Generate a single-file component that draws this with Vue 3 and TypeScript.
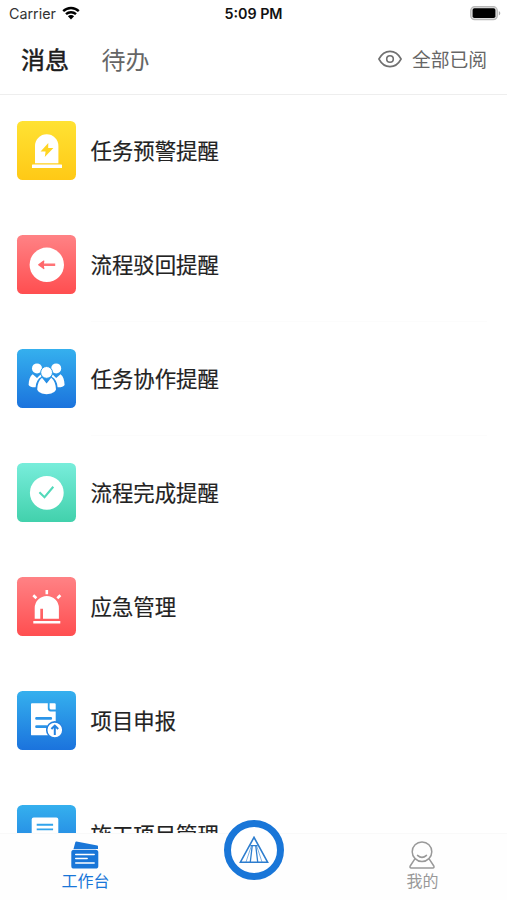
<script setup lang="ts">
import { ref } from 'vue'

interface MessageItem {
  icon: string
  tone: 'yellow' | 'red' | 'blue' | 'green'
  label: string
  divided?: boolean
}

const activeTab = ref<number>(0)
const tabs: string[] = ['消息', '待办']
const messages: MessageItem[] = [
  { icon: 'warning', tone: 'yellow', label: '任务预警提醒' },
  { icon: 'reject', tone: 'red', label: '流程驳回提醒', divided: true },
  { icon: 'team', tone: 'blue', label: '任务协作提醒', divided: true },
  { icon: 'done', tone: 'green', label: '流程完成提醒' },
  { icon: 'alarm', tone: 'red', label: '应急管理' },
  { icon: 'declare', tone: 'blue', label: '项目申报' },
  { icon: 'project', tone: 'blue', label: '施工项目管理' },
]
</script>

<template>
  <div class="screen">
    <div class="status">
      <div class="carrier">
        <span>Carrier</span>
        <svg class="wifi" width="18" height="14" viewBox="0 0 18 14">
          <path d="M1.2 5.2a11.2 11.2 0 0 1 15.6 0M4 8.2a7.2 7.2 0 0 1 10 0" fill="none" stroke="#000" stroke-width="2.4" />
          <path d="M9 13.6 5.9 10.3a4.4 4.4 0 0 1 6.2 0Z" fill="#000" />
        </svg>
      </div>
      <div class="time">5:09 PM</div>
      <svg class="battery" width="31" height="15" viewBox="0 0 31 15">
        <rect x=".7" y=".7" width="26.6" height="13" rx="4" fill="#ddd" stroke="#b8b8b8" stroke-width="1.2" />
        <rect x="2.6" y="2.3" width="22.8" height="9.8" rx="1.8" fill="#000" />
        <path d="M28.8 5v4.4c2-.8 2-3.6 0-4.4" fill="#aaa" />
      </svg>
    </div>

    <header class="header">
      <nav class="tabs">
        <span
          v-for="(tab, i) in tabs"
          :key="tab"
          class="tab"
          :class="{ active: i === activeTab }"
          @click="activeTab = i"
        >{{ tab }}</span>
      </nav>
      <div class="read-all">
        <svg width="24" height="18" viewBox="0 0 24 18" fill="none" stroke="#707070" stroke-width="1.6">
          <path d="M.9 9C6.4-1.2 17.6-1.2 23.1 9 17.6 19.2 6.4 19.2.9 9Z" stroke-linejoin="round" />
          <circle cx="12" cy="9" r="3.3" />
        </svg>
        <span>全部已阅</span>
      </div>
    </header>

    <main class="list">
      <div v-for="item in messages" :key="item.label" class="row">
        <div class="tile" :class="item.tone">
          <svg v-if="item.icon === 'warning'" viewBox="0 0 59 59">
            <path d="M18 42.3V25a11.7 11.7 0 0 1 23.4 0v17.3Z" fill="#fff" />
            <rect x="15" y="43.4" width="30" height="3.7" rx=".6" fill="#fff" />
            <path d="M31.3 22 23.6 30.4h5L27.8 36l8.6-9h-5.2Z" fill="#ffd522" />
          </svg>
          <svg v-else-if="item.icon === 'reject'" viewBox="0 0 59 59">
            <circle cx="29.8" cy="29.8" r="17.2" fill="#fff" />
            <path d="M25 29.8h13.2" stroke="#ff7376" stroke-width="2.4" />
            <path d="M26.8 26 21.7 29.8l5.1 3.8-.7-3.8Z" fill="#ff686b" stroke="#ff686b" stroke-width="1.2" stroke-linejoin="round" />
          </svg>
          <svg v-else-if="item.icon === 'team'" viewBox="0 0 59 59" fill="#fff">
            <circle cx="20" cy="19.4" r="5" />
            <circle cx="39.2" cy="19.4" r="5" />
            <path d="M15.7 25.2 20 29l3.5-3.5.9 2.2c-3.7 2.1-5.4 5.6-5.8 10.5-3.1.3-6-.7-7-2.3.2-4.6 1.3-8.7 4.1-10.7Z" />
            <path d="m43.5 25.2-4.3 3.8-3.5-3.5-.9 2.2c3.7 2.1 5.4 5.6 5.8 10.5 3.1.3 6-.7 7-2.3-.2-4.6-1.3-8.7-4.1-10.7Z" />
            <circle cx="29.6" cy="23.4" r="5.9" stroke="#2e9ee8" stroke-width="1" />
            <path d="m25 28.8 4.6 5.7 4.6-5.7c3 2.2 4.6 6.4 4.8 11.8-1 2.8-4.9 4.6-9.4 4.6s-8.4-1.8-9.4-4.6c.2-5.4 1.8-9.6 4.8-11.8Z" />
          </svg>
          <svg v-else-if="item.icon === 'done'" viewBox="0 0 59 59">
            <circle cx="29.8" cy="29.8" r="16.9" fill="#fff" />
            <path d="m22.4 29.2 5.1 5 8.8-10.4" fill="none" stroke="#53d9ba" stroke-width="2.1" />
          </svg>
          <svg v-else-if="item.icon === 'alarm'" viewBox="0 0 59 59">
            <path d="M17.7 41.8V31a12.1 12.1 0 0 1 24.2 0v10.8H26V31.7h-2.7v10.1Z" fill="#fff" />
            <path d="M16.3 45.3h27M29.8 13v4.2M16.3 18.3l3.1 3M43.4 18.3l-3.1 3" stroke="#fff" stroke-width="2.6" />
          </svg>
          <svg v-else-if="item.icon === 'declare'" viewBox="0 0 59 59">
            <path d="M14 13.2q0-.9.9-.9h15.9v5.3q0 2.8 2.8 2.8h5.1v23.9H14.9q-.9 0-.9-.9Z" fill="#fff" />
            <path d="M32.6 12.3h5q1.1 0 1.1 1.1v5.2h-4.4q-1.7 0-1.7-1.7Z" fill="#fff" />
            <path d="M19.5 27.4h14.3M19.5 35.7h9.8" stroke="#2b94e8" stroke-width="2.7" stroke-linecap="round" />
            <circle cx="37.8" cy="39" r="8.1" fill="#fff" stroke="#2583e1" stroke-width="1.6" />
            <path d="M37.8 44v-9M34.4 38l3.4-3.4 3.4 3.4" fill="none" stroke="#2583e1" stroke-width="2" />
          </svg>
          <svg v-else viewBox="0 0 59 59">
            <rect x="14.7" y="12.6" width="26.6" height="33" rx="2" fill="#fff" />
            <path d="M19.7 19.8h16.4M19.7 24.4h16.4M19.7 28.9h6" stroke="#31a4ec" stroke-width="1.9" />
          </svg>
        </div>
        <div class="content" :class="{ divided: item.divided }">
          <span class="label">{{ item.label }}</span>
        </div>
      </div>
    </main>

    <footer class="bottom">
      <div class="nav-item current">
        <svg width="28" height="28" viewBox="0 0 28 28">
          <path d="M2.5 7.9 4.4 1.1q.3-.8 1.1-.6l20.8 4q.7.2.7.9v2.5Z" fill="#1976d8" />
          <rect x=".3" y="8.7" width="27" height="18.9" rx="2.7" fill="#1976d8" />
          <path d="M4.7 13.5h18.5M4.7 17.5h11.5M4.7 22h18.5" stroke="#fff" stroke-width="1.4" stroke-linecap="round" />
        </svg>
        <span>工作台</span>
      </div>
      <div class="center-button">
        <svg width="30" height="28" viewBox="0 0 30 28" fill="none" stroke="#2d7dce" stroke-width="1.6">
          <path d="M15 1.3 1.4 26.2h27.2Z" />
          <path d="M11.4 9.6h7.2M13.2 10 11.3 26M16.8 10 18.7 26" stroke-width="1.3" />
          <path d="M12.3 10 7 26M17.7 10 23 26" stroke-width=".6" />
        </svg>
      </div>
      <div class="nav-item">
        <svg width="28" height="28" viewBox="0 0 28 28" fill="none" stroke="#999" stroke-width="1.5" stroke-linejoin="round" stroke-linecap="round">
          <circle cx="14" cy="10.7" r="9.8" />
          <path d="M6.7 18.2 2.2 25q-.8 1.8 1 1.9h21.6q1.8-.1 1-1.9l-4.5-6.8M9.5 14.4q4.5 4 9 0" />
        </svg>
        <span>我的</span>
      </div>
    </footer>
  </div>
</template>

<style>
body {
  margin: 0;
  background: #fff;
}
</style>

<style scoped>
.screen {
  width: 507px;
  height: 900px;
  display: flex;
  flex-direction: column;
  overflow: hidden;
  background: #fff;
  font-family: "Noto Sans CJK SC", sans-serif;
}
.status {
  height: 27px;
  flex: none;
  display: grid;
  grid-template-columns: 1fr auto 1fr;
  align-items: center;
  padding: 0 6px 0 9px;
  box-sizing: border-box;
  font-family: Inter, sans-serif;
  font-size: 14.3px;
  color: #333;
}
.carrier {
  display: flex;
  align-items: center;
  gap: 6px;
}
.wifi {
  margin-top: -2px;
}
.time {
  color: #111;
  font-weight: 600;
  margin-right: 3px;
}
.battery {
  justify-self: end;
  margin-top: -1px;
}
.header {
  flex: none;
  height: 67.5px;
  box-sizing: border-box;
  border-bottom: 1.5px solid #eee;
  padding: 0 20px 2px 21px;
  display: flex;
  align-items: center;
  justify-content: space-between;
}
.tabs {
  display: flex;
  gap: 32.5px;
}
.tab {
  font-size: 24px;
  line-height: 36px;
  color: #666;
}
.tab.active {
  color: #1c1c1c;
  -webkit-text-stroke: 0.5px #1c1c1c;
}
.read-all {
  display: flex;
  align-items: center;
  gap: 10px;
  font-size: 18.8px;
  line-height: 28px;
  color: #666;
}
.list {
  flex: 1;
  min-height: 0;
  overflow: hidden;
  padding-left: 17px;
}
.row {
  height: 113.9px;
  display: flex;
  align-items: center;
  gap: 14.5px;
}
.tile {
  flex: none;
  width: 59px;
  height: 59px;
  border-radius: 5.5px;
  overflow: hidden;
  margin-top: -1.5px;
}
.tile svg {
  display: block;
  width: 100%;
  height: 100%;
}
.yellow {
  background: linear-gradient(#ffe233, #ffc916);
}
.red {
  background: linear-gradient(#ff8285, #ff4e50);
}
.blue {
  background: linear-gradient(#35b0ee, #1b73dd);
}
.green {
  background: linear-gradient(#78eddb, #42d1ac);
}
.content {
  flex: 1;
  height: 100%;
  box-sizing: border-box;
  margin-right: 20px;
  padding-bottom: 1px;
  border-bottom: 1px solid transparent;
  display: flex;
  align-items: center;
}
.content.divided {
  border-bottom-color: #fcfcfc;
}
.label {
  font-size: 21.4px;
  line-height: 32px;
  color: #222;
  -webkit-text-stroke: 0.2px #222;
}
.bottom {
  height: 67px;
  flex: none;
  box-sizing: border-box;
  border-top: 1px solid #f9f9f9;
  background: #fefefe;
  display: grid;
  grid-template-columns: 1fr 1fr 1fr;
  justify-items: center;
}
.nav-item {
  display: flex;
  flex-direction: column;
  align-items: center;
  padding-top: 7px;
  font-size: 16px;
  line-height: 22px;
  color: #999;
}
.nav-item.current {
  color: #1976d8;
  padding-left: 2px;
}
.center-button {
  width: 60px;
  height: 60px;
  margin-top: -14px;
  box-sizing: border-box;
  border: 7px solid #1976d8;
  border-radius: 50%;
  background: #fff;
  display: flex;
  justify-content: center;
  align-items: center;
}
</style>
